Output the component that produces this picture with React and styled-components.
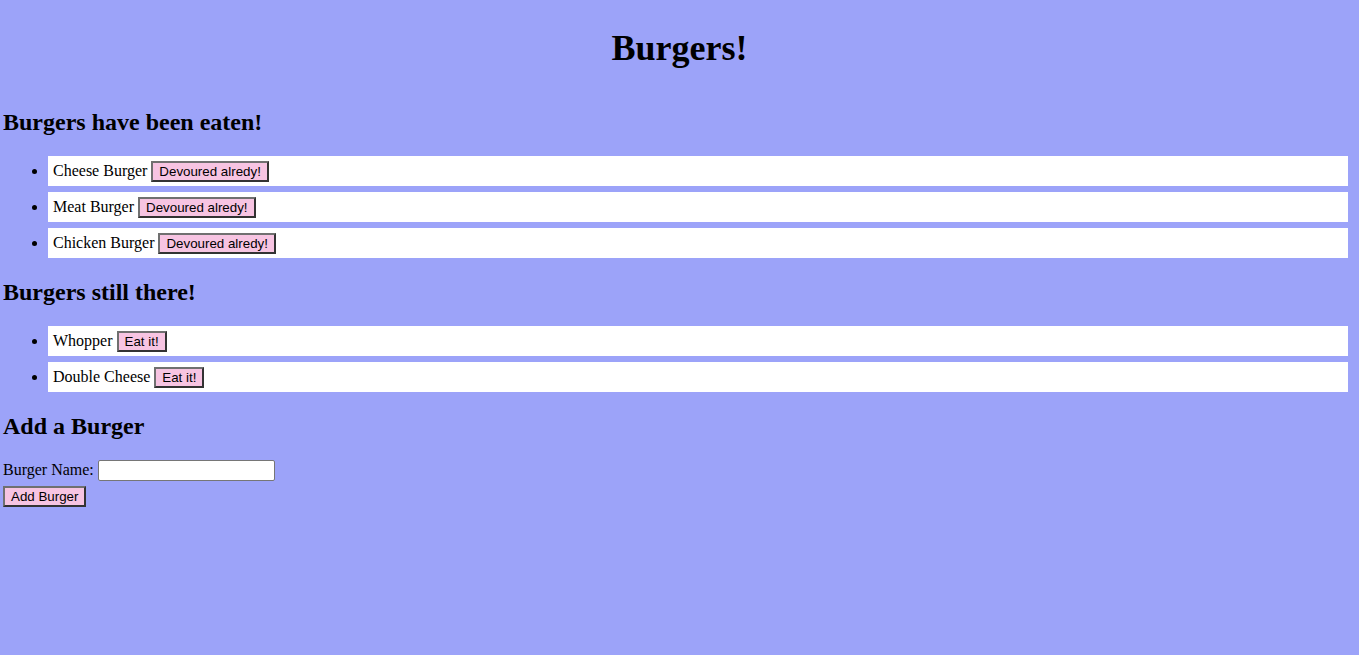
import React from "react";
import styled, { createGlobalStyle } from "styled-components";

const Global = createGlobalStyle`
  html, body {
    margin: 0;
    padding: 0;
    background: #9ca3f9;
  }
  body {
    font-family: "Liberation Serif", "Times New Roman", serif;
    font-size: 16px;
    color: #000;
  }
`;

const Page = styled.div`
  padding: 1px 3px 40px 3px;
  min-height: 655px;
  box-sizing: border-box;
`;

const Title = styled.h1`
  font-size: 36px;
  font-weight: bold;
  text-align: center;
  margin: 26px 0 40px;
`;

const SectionTitle = styled.h2`
  font-size: 24px;
  font-weight: bold;
  margin: 20px 0;
`;

const List = styled.ul`
  margin: 20px 8px 21px 0;
  padding-left: 45px;
  list-style: disc outside;
`;

const Item = styled.li`
  background: #ffffff;
  padding: 5px 5px 4px 5px;
  margin-bottom: 6px;
  line-height: normal;
  &:last-child {
    margin-bottom: 0;
  }
`;

const Button = styled.button`
  font-family: "Liberation Sans", Arial, sans-serif;
  font-size: 13.333px;
  color: #000;
  background: #f7c4e2;
  border-width: 2px;
  border-style: solid;
  border-color: #707070 #333333 #333333 #707070;
  padding: 1px 6px;
  margin: 0;
  height: 21px;
  box-sizing: border-box;
  line-height: normal;
  cursor: pointer;
`;

const Form = styled.form`
  margin: 0;
`;

const Label = styled.label`
  font-size: 16px;
`;

const Input = styled.input`
  width: 177px;
  height: 21px;
  box-sizing: border-box;
  border: 1px solid #767676;
  border-radius: 2px;
  background: #fff;
  padding: 1px 2px;
  margin: 0;
  font-family: "Liberation Sans", Arial, sans-serif;
  font-size: 13.333px;
`;

const FormRow = styled.div`
  margin-bottom: 5px;
`;

const eaten = ["Cheese Burger", "Meat Burger", "Chicken Burger"];
const remaining = ["Whopper", "Double Cheese"];

export default function App() {
  return (
    <>
      <Global />
      <Page>
        <Title>Burgers!</Title>
        <SectionTitle>Burgers have been eaten!</SectionTitle>
        <List>
          {eaten.map((b) => (
            <Item key={b}>
              {b} <Button type="button">Devoured alredy!</Button>
            </Item>
          ))}
        </List>
        <SectionTitle>Burgers still there!</SectionTitle>
        <List>
          {remaining.map((b) => (
            <Item key={b}>
              {b} <Button type="button">Eat it!</Button>
            </Item>
          ))}
        </List>
        <SectionTitle>Add a Burger</SectionTitle>
        <Form onSubmit={(e) => e.preventDefault()}>
          <FormRow>
            <Label htmlFor="bn">Burger Name:</Label> <Input id="bn" type="text" />
          </FormRow>
          <Button type="submit">Add Burger</Button>
        </Form>
      </Page>
    </>
  );
}
